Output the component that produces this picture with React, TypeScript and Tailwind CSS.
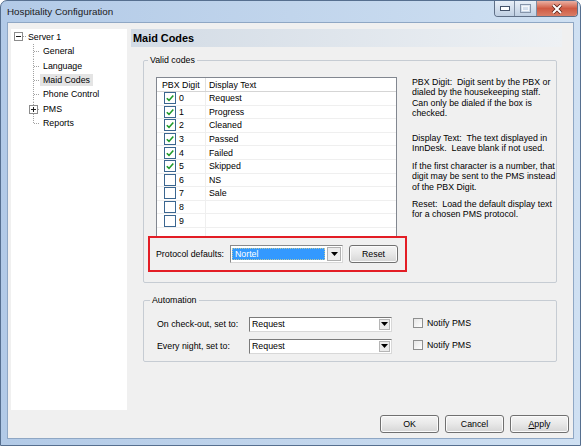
import React from "react";

const rows: [string, string, boolean][] = [
  ["0", "Request", true],
  ["1", "Progress", true],
  ["2", "Cleaned", true],
  ["3", "Passed", true],
  ["4", "Failed", true],
  ["5", "Skipped", true],
  ["6", "NS", false],
  ["7", "Sale", false],
  ["8", "", false],
  ["9", "", false],
];

function Check({ checked }: { checked: boolean }) {
  return (
    <span className="flex h-[12px] w-[12px] shrink-0 items-center justify-center border border-[#3b6690] bg-white">
      {checked && (
        <svg width="10" height="10" viewBox="0 0 10 10">
          <path d="M1.8 5.2 L4 7.4 L8.3 2.4" fill="none" stroke="#1f9a2a" strokeWidth="1.6" />
        </svg>
      )}
    </span>
  );
}

function Arrow() {
  return (
    <svg width="7" height="4" viewBox="0 0 7 4">
      <path d="M0 0 H7 L3.5 4 Z" fill="#000" />
    </svg>
  );
}

function Combo({ value }: { value: string }) {
  return (
    <div className="flex h-[15px] w-[143px] items-stretch border border-t-[#7a7a7a] border-l-[#7a7a7a] border-b-[#d8d8d8] border-r-[#d8d8d8] bg-white">
      <span className="flex-1 pl-[2px] leading-[13px]">{value}</span>
      <span className="m-[1px] flex w-[11px] items-center justify-center border border-[#b5b5b5] bg-[#ececec]">
        <Arrow />
      </span>
    </div>
  );
}

function WinButton({ children, w = "w-[59px]", h = "h-[18px]" }: { children: React.ReactNode; w?: string; h?: string }) {
  return (
    <div
      className={`flex ${w} ${h} items-center justify-center rounded-[3px] border border-[#707070] bg-linear-to-b from-[#f4f4f4] via-[#e8e8e8] to-[#d5d5d5] shadow-[inset_0_0_0_1px_#fbfbfb]`}
    >
      <span className="leading-[12px]">{children}</span>
    </div>
  );
}

function CaptionButtons() {
  return (
    <div className="mr-[2px] flex h-[16px] overflow-hidden rounded-b-[4px] border border-t-0 border-[#5f6f86]">
      <div className="flex w-[20px] items-center justify-center border-r border-[#7f8ea3] bg-linear-to-b from-[#e8eff8] to-[#bfcfe2]">
        <svg width="10" height="5" viewBox="0 0 10 5">
          <rect x="0.5" y="0.5" width="9" height="4" fill="#fff" stroke="#44536a" />
        </svg>
      </div>
      <div className="flex w-[22px] items-center justify-center border-r border-[#7f8ea3] bg-linear-to-b from-[#e8eff8] to-[#bfcfe2]">
        <svg width="11" height="9" viewBox="0 0 11 9">
          <rect x="0.5" y="0.5" width="10" height="8" fill="none" stroke="#8695aa" />
          <rect x="2.5" y="2.5" width="6" height="4" fill="none" stroke="#f4f7fb" />
        </svg>
      </div>
      <div className="flex w-[40px] items-center justify-center bg-linear-to-b from-[#eab0a3] via-[#cf5a43] to-[#d97d66]">
        <svg width="12" height="10" viewBox="0 0 12 10">
          <path d="M2 1 L10 9 M10 1 L2 9" stroke="#5a2118" strokeWidth="3.6" />
          <path d="M2 1 L10 9 M10 1 L2 9" stroke="#fff" strokeWidth="2" />
        </svg>
      </div>
    </div>
  );
}

function Tree() {
  const children = ["General", "Language", "Maid Codes", "Phone Control", "PMS", "Reports"];
  return (
    <div className="h-[381px] w-[116px] shrink-0 bg-white pt-[1px]">
      <div className="flex h-[14.33px] items-center pl-[3px]">
        <svg width="14" height="14" viewBox="0 0 14 14" className="shrink-0">
          <rect x="0.5" y="2.5" width="8" height="8" fill="#fff" stroke="#8c8c8c" />
          <path d="M2 6.5H7" stroke="#1c1c1c" />
          <path d="M9 6.5H13" stroke="#a0a0a0" strokeDasharray="1 1" />
        </svg>
        <span className="leading-[12px]">Server 1</span>
      </div>
      {children.map((c, i) => {
        const last = i === children.length - 1;
        return (
          <div key={c} className="flex h-[14.33px] items-center">
            <svg width="29" height="14.33" viewBox="0 0 29 14.33" className="shrink-0">
              <path d={last ? "M22.5 0V7" : "M22.5 0V14.33"} stroke="#a0a0a0" strokeDasharray="1 1" />
              <path d="M23 7.5H29" stroke="#a0a0a0" strokeDasharray="1 1" />
              {c === "PMS" && (
                <g>
                  <rect x="18.5" y="3.5" width="8" height="8" fill="#fff" stroke="#8c8c8c" />
                  <path d="M20 7.5H25 M22.5 5V10" stroke="#1c1c1c" />
                </g>
              )}
            </svg>
            <span className={`px-[3px] leading-[12px] ${c === "Maid Codes" ? "bg-[#e4e4e4]" : ""}`}>{c}</span>
          </div>
        );
      })}
    </div>
  );
}

function Grid() {
  return (
    <div className="ml-[8px] flex h-[160px] w-[241px] flex-col border border-[#828790] bg-white">
      <div className="flex h-[14px] shrink-0 items-center border-b border-[#d5d5d5]">
        <div className="flex h-full w-[49px] items-center border-r border-[#e0e0e0] pl-[5px]">
          <span className="leading-[12px]">PBX Digit</span>
        </div>
        <div className="pl-[3px] leading-[12px]">Display Text</div>
      </div>
      {rows.map(([d, t, c]) => (
        <div key={d} className="flex h-[13.6px] shrink-0 items-stretch border-b border-[#efefef]">
          <div className="flex w-[49px] items-center border-r border-[#efefef] pl-[7px]">
            <Check checked={c} />
            <span className="ml-[3px] leading-[12px]">{d}</span>
          </div>
          <div className="flex items-center pl-[3px]">
            <span className="leading-[12px]">{t}</span>
          </div>
        </div>
      ))}
      <div className="flex flex-1">
        <div className="w-[49px] border-r border-[#efefef]" />
      </div>
    </div>
  );
}

function Help() {
  const line = "whitespace-pre";
  return (
    <div className="ml-[5px] leading-[10.4px]">
      <div>
        <div className={line}>PBX Digit:  Digit sent by the PBX or</div>
        <div className={line}>dialed by the housekeeping staff.</div>
        <div className={line}>Can only be dialed if the box is</div>
        <div className={line}>checked.</div>
      </div>
      <div className="mt-[14.4px]">
        <div className={line}>Display Text:  The text displayed in</div>
        <div className={line}>InnDesk.  Leave blank if not used.</div>
      </div>
      <div className="mt-[6.9px]">
        <div className={line}>If the first character is a number, that</div>
        <div className={line}>digit may be sent to the PMS instead</div>
        <div className={line}>of the PBX Digit.</div>
      </div>
      <div className="mt-[6.8px]">
        <div className={line}>Reset:  Load the default display text</div>
        <div className={line}>for a chosen PMS protocol.</div>
      </div>
    </div>
  );
}

function RightPane() {
  return (
    <div className="ml-[4px] w-[431px] shrink-0">
      <div className="flex h-[18px] items-center bg-linear-to-r from-[#d2dbe5] to-[#eef1f4] pl-[2px]">
        <span className="text-[10.9px] font-bold leading-[13px]">Maid Codes</span>
      </div>

      <fieldset className="ml-[12px] mr-[5px] mt-[7.5px] rounded-[2px] border border-[#c6ccd3]">
        <legend className="ml-[4px] px-[2px] leading-[11px]">Valid codes</legend>
        <div className="flex pb-[10px] pl-[4px] pt-[11.5px]">
          <div className="w-[259px] shrink-0">
            <Grid />
            <div className="-mt-[1px] flex h-[36px] items-center border-2 border-[#e31d25] pb-[1px]">
              <div className="w-[80px] shrink-0 pl-[6px] leading-[12px]">Protocol defaults:</div>
              <div className="flex h-[18px] w-[113px] items-stretch border border-t-[#8a8a8a] border-l-[#8a8a8a] border-b-[#d8d8d8] border-r-[#d8d8d8] bg-white">
                <div className="mx-[1px] my-[2px] flex flex-1 items-center border border-dotted border-[#b9c7a0] bg-[#3399ff] pl-[2px]">
                  <span className="leading-[12px] text-white">Nortel</span>
                </div>
                <span className="m-[1px] flex w-[14px] items-center justify-center border border-[#b0b0b0] bg-[#ececec]">
                  <Arrow />
                </span>
              </div>
              <div className="ml-[6px]">
                <WinButton w="w-[49px]" h="h-[18px]">Reset</WinButton>
              </div>
            </div>
          </div>
          <Help />
        </div>
      </fieldset>

      <fieldset className="ml-[12px] mr-[5px] mt-[12px] rounded-[2px] border border-[#c6ccd3]">
        <legend className="ml-[6px] px-[2px] leading-[11px]">Automation</legend>
        <div className="flex flex-col gap-[7px] pb-[7px] pt-[10.8px]">
          {["On check-out, set to:", "Every night, set to:"].map((l) => (
            <div key={l} className="flex items-center">
              <div className="w-[105px] shrink-0 pl-[13px] leading-[12px]">{l}</div>
              <Combo value="Request" />
              <div className="mb-[3px] ml-[21px] flex items-center">
                <span className="h-[10px] w-[10px] border border-[#8e8f8f] bg-linear-to-br from-[#e6e6e6] to-[#ffffff]" />
                <span className="ml-[4px] leading-[12px]">Notify PMS</span>
              </div>
            </div>
          ))}
        </div>
      </fieldset>
    </div>
  );
}

export default function App() {
  return (
    <div className="h-[446px] w-[581px] overflow-hidden rounded-t-[7px] border border-[#566f8f] bg-linear-to-r from-[#b2cae7] via-[#c1d5ec] to-[#cfe0f2] font-['Liberation_Sans',Arial,sans-serif] text-[8.8px] leading-none text-black">
      <div className="flex h-[21px] items-start justify-between">
        <div className="pl-[6px] pt-[5px] text-[9.8px] leading-[12px] text-[#1b1b1b]">Hospitality Configuration</div>
        <CaptionButtons />
      </div>
      <div className="mx-[6px] flex h-[417px] flex-col border border-[#8fa7c4] bg-[#f0f0f0]">
        <div className="flex pl-[3px] pt-[6px]">
          <Tree />
          <RightPane />
        </div>
        <div className="mt-[5px] flex justify-end gap-[6px] pr-[4px]">
          <WinButton>OK</WinButton>
          <WinButton>Cancel</WinButton>
          <WinButton>
            <span className="underline">A</span>pply
          </WinButton>
        </div>
      </div>
    </div>
  );
}
